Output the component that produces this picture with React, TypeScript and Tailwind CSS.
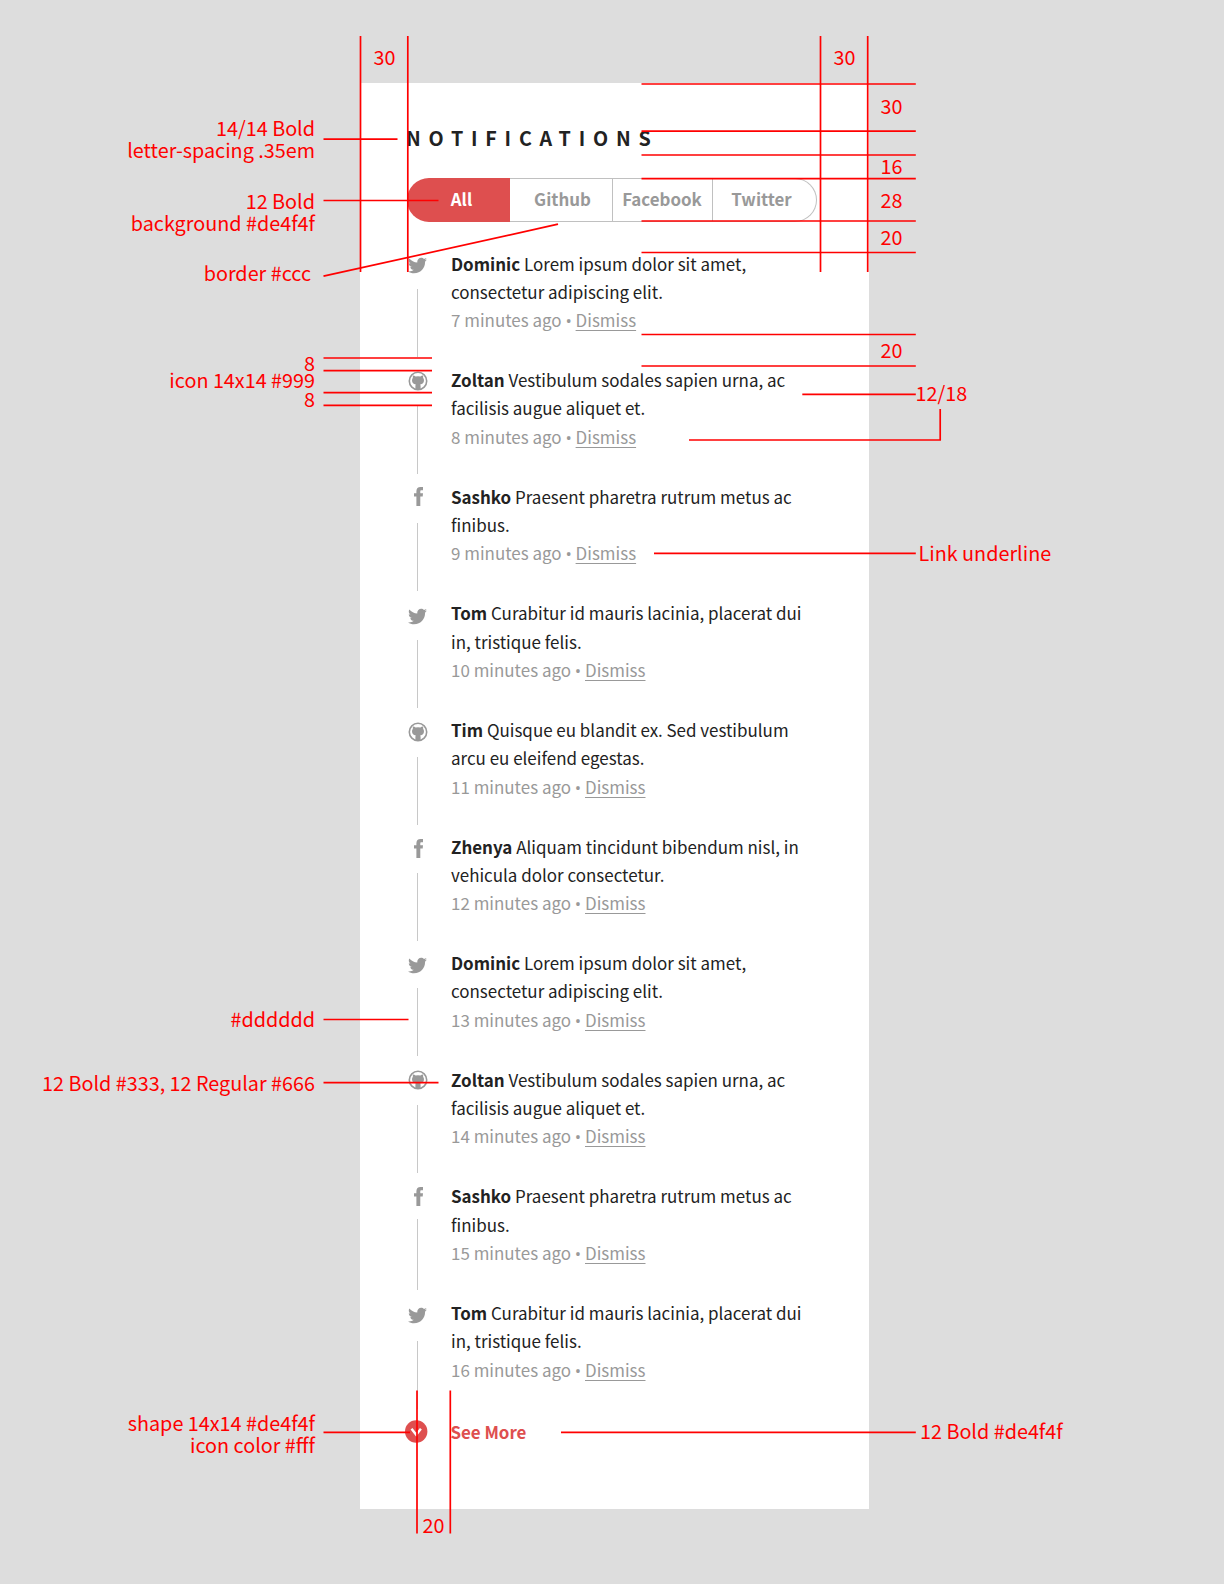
import { FaTwitter } from "react-icons/fa";

type Source = "twitter" | "github" | "facebook";

type Item = {
  source: Source;
  name: string;
  first: string;
  second: string;
  age: number;
  icon: string;
  line: string;
};

const items: Item[] = [
  { source: "twitter", name: "Dominic", first: "Lorem ipsum dolor sit amet,", second: "consectetur adipiscing elit.", age: 7, icon: "h-[39px] pt-[6.4px]", line: "h-[68px]" },
  { source: "github", name: "Zoltan", first: "Vestibulum sodales sapien urna, ac", second: "facilisis augue aliquet et.", age: 8, icon: "h-[39.4px] pt-[4.4px]", line: "h-[68px]" },
  { source: "facebook", name: "Sashko", first: "Praesent pharetra rutrum metus ac", second: "finibus.", age: 9, icon: "h-[40px] pt-[4.600px]", line: "h-[68px]" },
  { source: "twitter", name: "Tom", first: "Curabitur id mauris lacinia, placerat dui", second: "in, tristique felis.", age: 10, icon: "h-[41px] pt-[8px]", line: "h-[68px]" },
  { source: "github", name: "Tim", first: "Quisque eu blandit ex. Sed vestibulum", second: "arcu eu eleifend egestas.", age: 11, icon: "h-[41.4px] pt-[6px]", line: "h-[68px]" },
  { source: "facebook", name: "Zhenya", first: "Aliquam tincidunt bibendum nisl, in", second: "vehicula dolor consectetur.", age: 12, icon: "h-[40.2px] pt-[6.4px]", line: "h-[68px]" },
  { source: "twitter", name: "Dominic", first: "Lorem ipsum dolor sit amet,", second: "consectetur adipiscing elit.", age: 13, icon: "h-[38.500px] pt-[6.4px]", line: "h-[68px]" },
  { source: "github", name: "Zoltan", first: "Vestibulum sodales sapien urna, ac", second: "facilisis augue aliquet et.", age: 14, icon: "h-[39.4px] pt-[4.4px]", line: "h-[68px]" },
  { source: "facebook", name: "Sashko", first: "Praesent pharetra rutrum metus ac", second: "finibus.", age: 15, icon: "h-[36.6px] pt-[4.6px]", line: "h-[71px]" },
  { source: "twitter", name: "Tom", first: "Curabitur id mauris lacinia, placerat dui", second: "in, tristique felis.", age: 16, icon: "h-[42.4px] pt-[7px]", line: "h-[68px]" },
];

function GithubIcon() {
  return (
    <svg viewBox="0 0 20 20" className="ml-px h-5 w-5">
      <circle cx="10" cy="10" r="8.7" fill="none" stroke="currentColor" strokeWidth="1.6" />
      <path
        fill="currentColor"
        d="M5 4.500c1 .1 1.900.5 2.600 1a9.500 9.500 0 0 1 4.800 0c.7-.5 1.600-.9 2.600-1 .3.800.3 1.500.1 2.200.6.7.9 1.600.9 2.600 0 2.600-1.500 3.900-3.800 4.200.3.400.4.900.4 1.500v3.600a8.500 8.500 0 0 1-5.200 0v-3.600c0-.6.1-1.100.4-1.500C5.500 13.200 4 11.900 4 9.300c0-1 .3-1.900.9-2.600-.2-.7-.2-1.400.1-2.200z"
      />
    </svg>
  );
}

function FacebookIcon() {
  return (
    <svg viewBox="0 0 9 19" fill="currentColor" className="ml-[7px] h-[19px] w-[9px]">
      <path d="M9 .1V3.300H7.400c-.8 0-1.100.4-1.100 1.100v1.900H9l-.3 3.200H6.300V19H2.400V9.500H0V6.300h2.400V4.200C2.400 1.500 3.900 0 6.500 0 7.700 0 8.600.05 9 .1z" />
    </svg>
  );
}

function SourceIcon({ source }: { source: Source }) {
  if (source === "twitter") return <FaTwitter className="ml-[1.4px] h-[19px] w-[19px]" />;
  if (source === "github") return <GithubIcon />;
  return <FacebookIcon />;
}

const lines: [number, number, number, number][] = [
  [360.5, 36, 360.5, 272],
  [407.8, 36, 407.8, 272],
  [820.5, 36, 820.5, 272],
  [867.7, 36, 867.7, 272],
  [641.5, 84, 915.8, 84],
  [641.5, 131.2, 915.8, 131.2],
  [641.5, 155, 915.8, 155],
  [641.5, 178.6, 915.8, 178.6],
  [641.5, 221, 915.8, 221],
  [641.5, 252.5, 915.8, 252.5],
  [641.5, 334.5, 915.8, 334.5],
  [641.5, 366, 915.8, 366],
  [802.3, 394.4, 915.8, 394.4],
  [689, 440, 941, 440],
  [940.2, 440, 940.2, 409],
  [654, 553.3, 915.8, 553.3],
  [561, 1432.3, 915.8, 1432.3],
  [323.5, 139.2, 397.5, 139.2],
  [323.5, 200.5, 438.5, 200.5],
  [323.5, 276.2, 558, 224.2],
  [323.5, 358, 432, 358],
  [323.5, 370.6, 432, 370.6],
  [323.5, 392.7, 432, 392.7],
  [323.5, 405.4, 432, 405.4],
  [323.5, 1019.5, 408.5, 1019.5],
  [323.5, 1082.7, 438.5, 1082.7],
  [323.5, 1432.4, 410, 1432.4],
  [417, 1390.5, 417, 1533.5],
  [450.3, 1390.5, 450.3, 1533.5],
];

const notes: { text: string[]; place: string }[] = [
  { text: ["30"], place: "left-[373.5px] top-[46px]" },
  { text: ["30"], place: "left-[833.5px] top-[46px]" },
  { text: ["14/14 Bold", "letter-spacing .35em"], place: "right-[909px] top-[117px]" },
  { text: ["12 Bold", "background #de4f4f"], place: "right-[909px] top-[190px]" },
  { text: ["border #ccc"], place: "right-[913px] top-[262px]" },
  { text: ["8"], place: "right-[909px] top-[352px]" },
  { text: ["icon 14x14 #999"], place: "right-[909px] top-[369px]" },
  { text: ["8"], place: "right-[909px] top-[388px]" },
  { text: ["#dddddd"], place: "right-[909px] top-[1008px]" },
  { text: ["12 Bold #333, 12 Regular #666"], place: "right-[909px] top-[1072px]" },
  { text: ["shape 14x14 #de4f4f", "icon color #fff"], place: "right-[909px] top-[1412px]" },
  { text: ["30"], place: "left-[880.5px] top-[95px]" },
  { text: ["16"], place: "left-[880.5px] top-[155px]" },
  { text: ["28"], place: "left-[880.5px] top-[189px]" },
  { text: ["20"], place: "left-[880.5px] top-[226px]" },
  { text: ["20"], place: "left-[880.5px] top-[339px]" },
  { text: ["12/18"], place: "left-[915.5px] top-[382px]" },
  { text: ["Link underline"], place: "left-[918.5px] top-[542px]" },
  { text: ["12 Bold #de4f4f"], place: "left-[920px] top-[1420px]" },
  { text: ["20"], place: "left-[422.5px] top-[1514px]" },
];

export default function App() {
  return (
    <div className="relative h-[1584px] w-[1224px] overflow-hidden bg-[#dddddd] pt-[83px] pl-[360px] font-['Noto_Sans_CJK_SC',sans-serif]">
      <section className="h-[1426px] w-[509px] bg-white pt-[43px] pl-[47px]">
        <h1 className="-ml-px h-[52px] text-[19.7px] leading-[24px] font-bold tracking-[7.8px] whitespace-nowrap text-[#222]">
          NOTIFICATIONS
        </h1>
        <nav className="flex h-[44px] w-[410px] text-[16.9px] leading-[40px] font-bold text-[#999]">
          <button className="w-[103px] rounded-l-full bg-[#de4f4f] pb-[2px] pl-[6px] leading-[42px] text-white">All</button>
          <button className="w-[103px] border-y border-r border-[#c0c0c0] pb-[2px] pl-[3px]">Github</button>
          <button className="w-[100px] border-y border-r border-[#c0c0c0] pr-[1px] pb-[2px]">Facebook</button>
          <button className="w-[104px] rounded-r-full border-y border-r border-[#c0c0c0] pr-[6px] pb-[2px]">Twitter</button>
        </nav>
        <ul className="mt-[27.6px] text-[16.97px] leading-[28.3px] whitespace-nowrap text-[#222]">
          {items.map((item) => (
            <li key={item.age} className="flex h-[116.6px]">
              <div className="w-[44px] text-[#999]">
                <div className={item.icon}>
                  <SourceIcon source={item.source} />
                </div>
                <div className={`ml-[10px] w-px bg-[#c8c8c8] ${item.line}`} />
              </div>
              <div>
                <p>
                  <b>{item.name}</b> {item.first}
                </p>
                <p>{item.second}</p>
                <p className="text-[#999]">
                  {item.age} minutes ago <span className="font-['Open_Sans'] leading-none">•</span>{" "}
                  <a className="underline decoration-1 underline-offset-[3px] [text-decoration-skip-ink:none]">Dismiss</a>
                </p>
              </div>
            </li>
          ))}
        </ul>
        <div className="mt-[2px] -ml-[1.6px] flex items-center gap-[22px] text-[16.9px] leading-[28px] font-bold text-[#de4f4f]">
          <svg viewBox="0 0 23 23" className="h-[23px] w-[23px]">
            <circle cx="11.2" cy="11.5" r="11.2" fill="#de4f4f" />
            <path d="M6.5 8.8l4.700 6 4.700-6" fill="none" stroke="#fff" strokeWidth="2.4" />
          </svg>
          <span>See More</span>
        </div>
      </section>

      <svg viewBox="0 0 1224 1584" className="pointer-events-none absolute inset-0 h-full w-full" stroke="#ff0000" strokeWidth="1.7">
        {lines.map(([x1, y1, x2, y2]) => (
          <line key={`${x1}-${y1}-${x2}`} x1={x1} y1={y1} x2={x2} y2={y2} />
        ))}
      </svg>
      {notes.map((note) => (
        <div key={note.place} className={`absolute text-right text-[19.8px] leading-[22px] whitespace-nowrap text-[#ff0000] ${note.place}`}>
          {note.text.map((line) => (
            <div key={line}>{line}</div>
          ))}
        </div>
      ))}
    </div>
  );
}
